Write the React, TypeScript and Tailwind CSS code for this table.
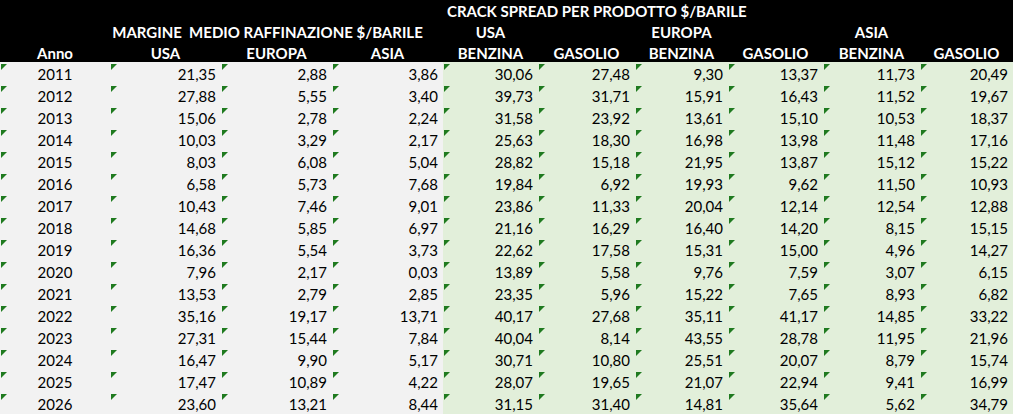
import React from 'react';

const rows: [string, string[]][] = [
  ['2011', ['21,35', '2,88', '3,86', '30,06', '27,48', '9,30', '13,37', '11,73', '20,49']],
  ['2012', ['27,88', '5,55', '3,40', '39,73', '31,71', '15,91', '16,43', '11,52', '19,67']],
  ['2013', ['15,06', '2,78', '2,24', '31,58', '23,92', '13,61', '15,10', '10,53', '18,37']],
  ['2014', ['10,03', '3,29', '2,17', '25,63', '18,30', '16,98', '13,98', '11,48', '17,16']],
  ['2015', ['8,03', '6,08', '5,04', '28,82', '15,18', '21,95', '13,87', '15,12', '15,22']],
  ['2016', ['6,58', '5,73', '7,68', '19,84', '6,92', '19,93', '9,62', '11,50', '10,93']],
  ['2017', ['10,43', '7,46', '9,01', '23,86', '11,33', '20,04', '12,14', '12,54', '12,88']],
  ['2018', ['14,68', '5,85', '6,97', '21,16', '16,29', '16,40', '14,20', '8,15', '15,15']],
  ['2019', ['16,36', '5,54', '3,73', '22,62', '17,58', '15,31', '15,00', '4,96', '14,27']],
  ['2020', ['7,96', '2,17', '0,03', '13,89', '5,58', '9,76', '7,59', '3,07', '6,15']],
  ['2021', ['13,53', '2,79', '2,85', '23,35', '5,96', '15,22', '7,65', '8,93', '6,82']],
  ['2022', ['35,16', '19,17', '13,71', '40,17', '27,68', '35,11', '41,17', '14,85', '33,22']],
  ['2023', ['27,31', '15,44', '7,84', '40,04', '8,14', '43,55', '28,78', '11,95', '21,96']],
  ['2024', ['16,47', '9,90', '5,17', '30,71', '10,80', '25,51', '20,07', '8,79', '15,74']],
  ['2025', ['17,47', '10,89', '4,22', '28,07', '19,65', '21,07', '22,94', '9,41', '16,99']],
  ['2026', ['23,60', '13,21', '8,44', '31,15', '31,40', '14,81', '35,64', '5,62', '34,79']],
];

const cols = 'grid grid-cols-[110px_111px_111px_111px_95px_97px_93px_95px_97px_93px]';

// little green "number stored as text" marker, like Excel
function Flag() {
  return (
    <svg className="absolute left-[1px] top-[2px]" width="6" height="6" viewBox="0 0 6 6">
      <polygon points="0,0 6,0 0,6" fill="#1f7a1f" />
    </svg>
  );
}

function Cell({ children, green, center }: { children: React.ReactNode; green?: boolean; center?: boolean }) {
  return (
    <div
      className={`relative h-[22px] flex items-end pb-[1px] ${center ? 'justify-center' : 'justify-end pr-[5px]'} ${
        green ? 'bg-[#e2efda]' : 'bg-[#f2f2f2]'
      }`}
    >
      <Flag />
      <span className="leading-[18px]">{children}</span>
    </div>
  );
}

function Head({ children, className = '' }: { children?: React.ReactNode; className?: string }) {
  return <div className={`flex items-end justify-center leading-[18px] whitespace-nowrap ${className}`}>{children}</div>;
}

export default function App() {
  return (
    <div className="w-[1013px] h-[417px] bg-white overflow-hidden text-[15px] text-black font-['Lato',sans-serif]">
      {/* header */}
      <div className={`${cols} bg-black text-white font-bold`}>
        <div className="h-[20px]" />
        <div className="col-span-3" />
        <div className="col-span-6 h-[20px] flex items-end pl-[4px] leading-[18px] whitespace-nowrap">
          CRACK SPREAD PER PRODOTTO $/BARILE
        </div>

        <div className="h-[21px]" />
        <Head className="col-span-3 h-[21px] pr-[18px]">MARGINE&nbsp; MEDIO RAFFINAZIONE $/BARILE</Head>
        <Head className="h-[21px]">USA</Head>
        <div />
        <Head className="h-[21px]">EUROPA</Head>
        <div />
        <Head className="h-[21px]">ASIA</Head>
        <div />

        <Head className="h-[21px]">Anno</Head>
        <Head>USA</Head>
        <Head>EUROPA</Head>
        <Head>ASIA</Head>
        <Head>BENZINA</Head>
        <Head>GASOLIO</Head>
        <Head>BENZINA</Head>
        <Head>GASOLIO</Head>
        <Head>BENZINA</Head>
        <Head>GASOLIO</Head>
      </div>

      {/* body */}
      <div className={cols}>
        {rows.map(([year, vals]) => (
          <React.Fragment key={year}>
            <Cell center>{year}</Cell>
            {vals.map((v, i) => (
              <Cell key={i} green={i >= 3}>
                {v}
              </Cell>
            ))}
          </React.Fragment>
        ))}
      </div>
    </div>
  );
}
